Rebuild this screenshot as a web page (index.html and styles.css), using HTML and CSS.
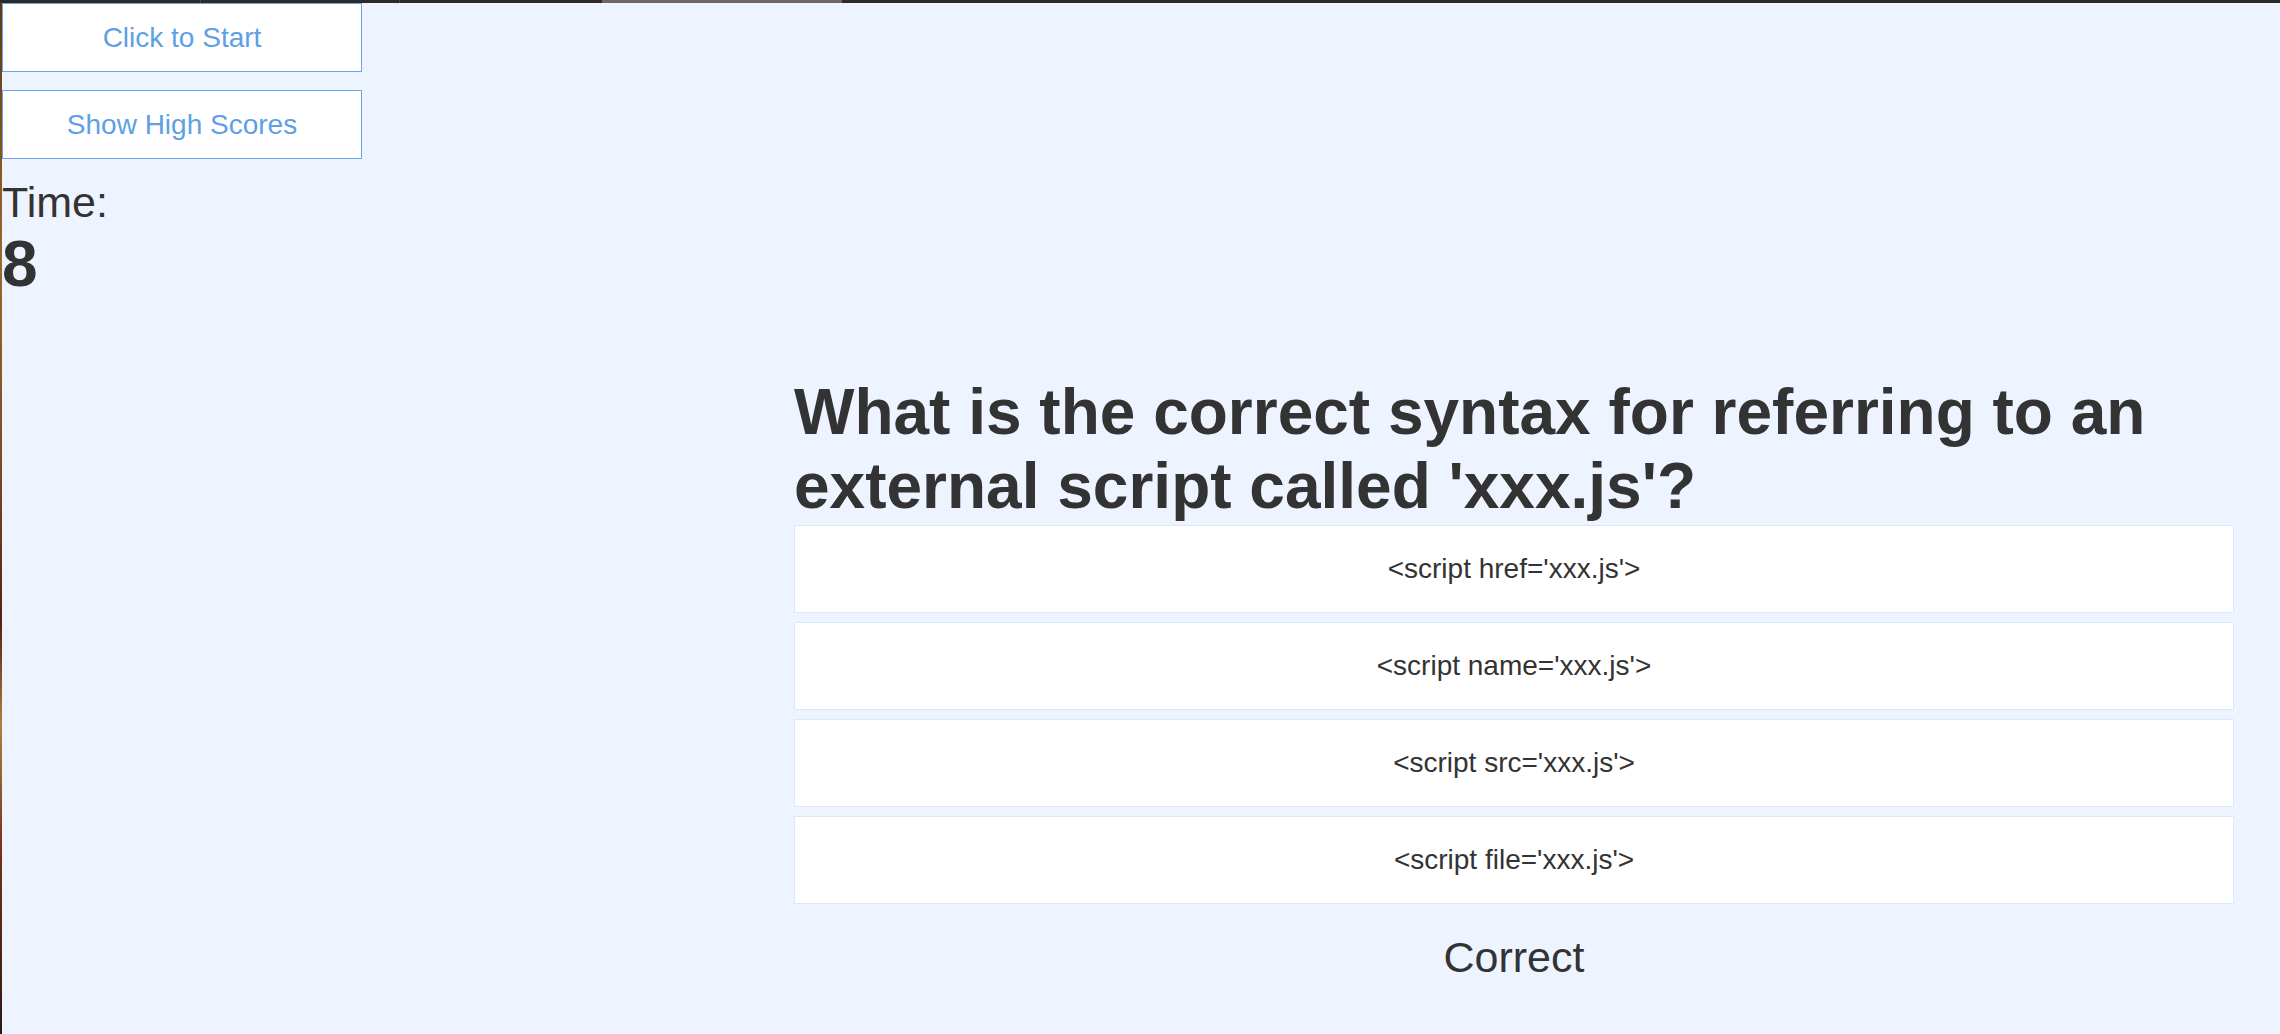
FILE: index.html
```html
<!DOCTYPE html>
<html lang="en">
<head>
<meta charset="utf-8">
<title>Code Quiz</title>
<link rel="stylesheet" href="styles.css">
</head>
<body>
<div class="chrome-top">
  <span class="seg seg-a"></span>
  <span class="seg seg-b"></span>
  <span class="seg seg-c"></span>
  <span class="seg seg-d"></span>
  <span class="seg seg-e"></span>
</div>
<div class="page">
  <div class="edge"></div>
  <aside class="side">
    <button class="btn">Click to Start</button>
    <button class="btn">Show High Scores</button>
    <div class="time-label">Time:</div>
    <div class="time-value">8</div>
  </aside>
  <main class="quiz">
    <h1 class="question">What is the correct syntax for referring to an external script called 'xxx.js'?</h1>
    <div class="answers">
      <button class="answer">&lt;script href='xxx.js'&gt;</button>
      <button class="answer">&lt;script name='xxx.js'&gt;</button>
      <button class="answer">&lt;script src='xxx.js'&gt;</button>
      <button class="answer">&lt;script file='xxx.js'&gt;</button>
    </div>
    <p class="result">Correct</p>
  </main>
</div>
</body>
</html>
```
FILE: styles.css
```css
* {
  box-sizing: border-box;
}

html, body {
  margin: 0;
  padding: 0;
}

body {
  background: #edf4ff;
  color: #333333;
  font-family: "Liberation Sans", Arial, sans-serif;
  height: 1034px;
  overflow: hidden;
}

.chrome-top {
  display: flex;
  height: 3px;
  background: #2d2927;
}

.seg {
  display: block;
  height: 3px;
}

.seg-a {
  width: 201px;
  border-right: 1px solid #4a4542;
}

.seg-b {
  width: 199px;
  border-right: 1px solid #4a4542;
}

.seg-c {
  width: 202px;
}

.seg-d {
  width: 240px;
  background: #6f6761;
}

.seg-e {
  flex: 1;
}

.page {
  display: flex;
  height: 1031px;
}

.edge {
  width: 2px;
  flex: none;
  background: linear-gradient(to bottom,
    #5a3a1c 0%,
    #9a6a2a 25%,
    #7a4a22 45%,
    #5a1e12 60%,
    #b0803e 70%,
    #7a3018 82%,
    #2a1a12 100%);
}

.side {
  width: 792px;
  flex: none;
  display: flex;
  flex-direction: column;
  align-items: flex-start;
}

.btn {
  width: 360px;
  height: 69px;
  margin: 0 0 18px 0;
  padding: 0;
  background: #ffffff;
  border: 1px solid #6aa5e6;
  color: #5e9fe6;
  font-family: "Liberation Sans", Arial, sans-serif;
  font-size: 28px;
  text-align: center;
}

.btn + .btn {
  margin-bottom: 0;
}

.time-label {
  margin-top: 19px;
  font-size: 43px;
}

.time-value {
  font-size: 64px;
  font-weight: bold;
}

.quiz {
  width: 1440px;
  flex: none;
  padding-top: 372px;
}

.question {
  margin: 0 0 2px 0;
  font-size: 64px;
  font-weight: bold;
  line-height: normal;
}

.answers {
  display: flex;
  flex-direction: column;
  gap: 9px;
}

.answer {
  display: flex;
  align-items: center;
  justify-content: center;
  width: 100%;
  height: 88px;
  margin: 0;
  padding: 0;
  background: #ffffff;
  border: 1px solid #dce8f8;
  color: #333333;
  font-family: "Liberation Sans", Arial, sans-serif;
  font-size: 28px;
}

.result {
  margin: 29px 0 0 0;
  text-align: center;
  font-size: 43px;
}
```
